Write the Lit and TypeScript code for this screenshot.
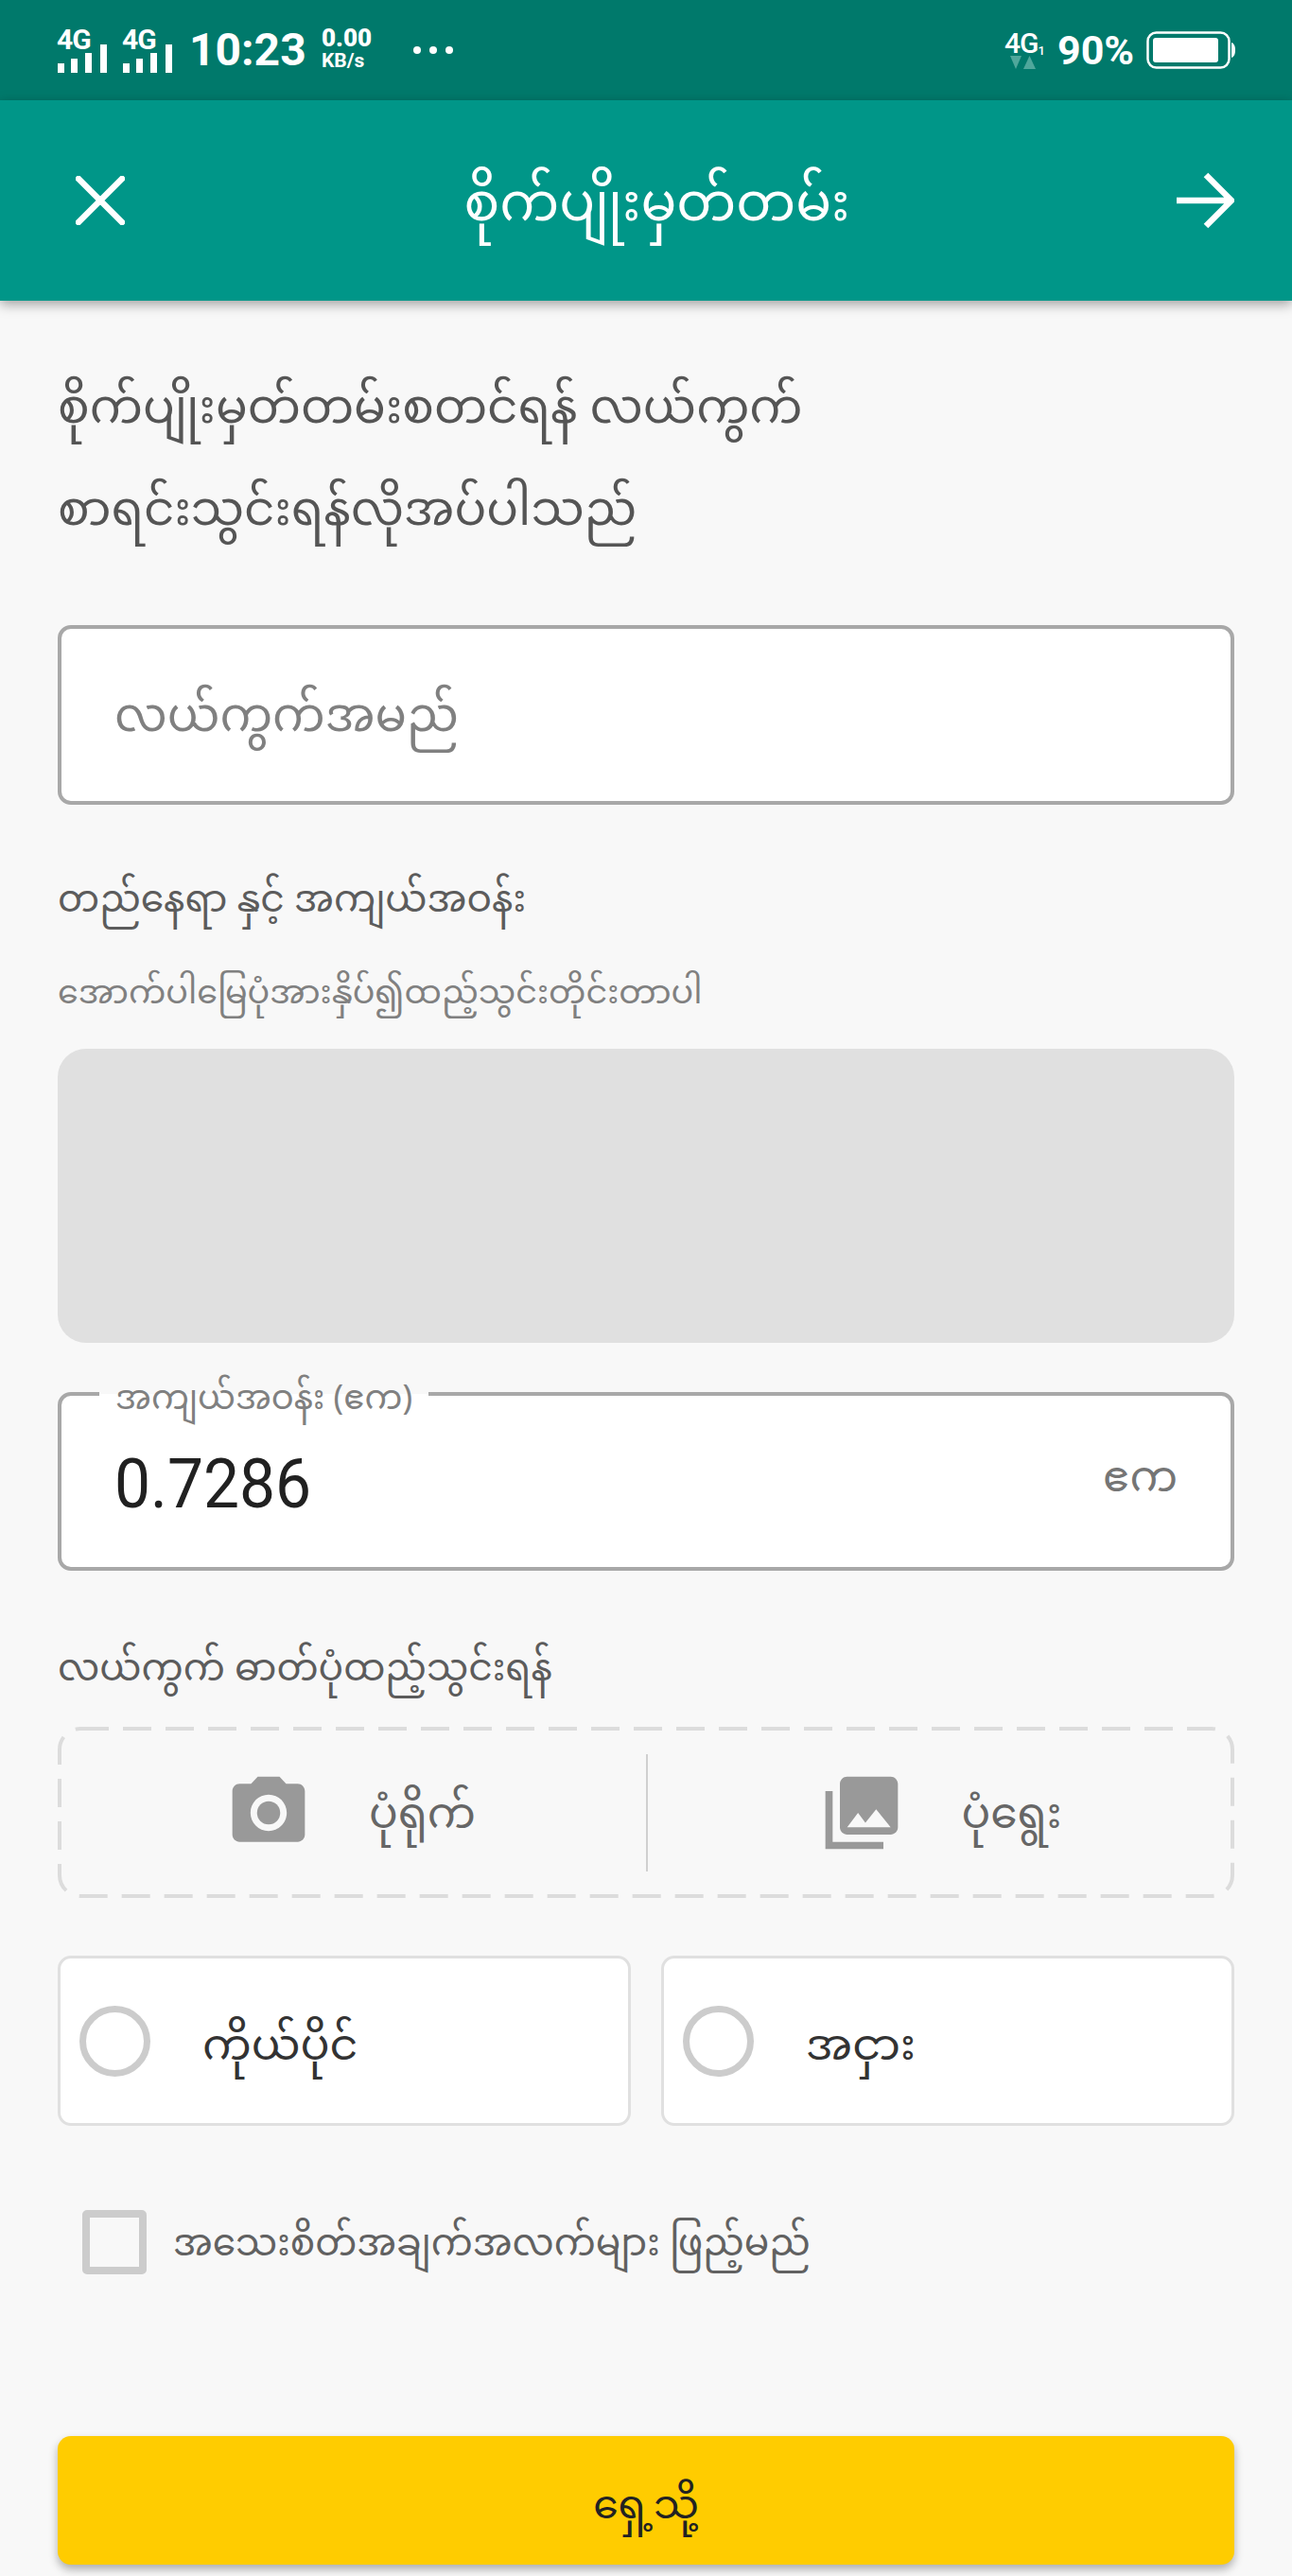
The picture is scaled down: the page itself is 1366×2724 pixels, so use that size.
import { LitElement, html, css, svg } from "lit";
import { customElement } from "lit/decorators.js";

const signal = () => svg`
  <rect x="1" y="20" width="7" height="10" fill="#fff"/>
  <rect x="15" y="15" width="7" height="15" fill="#fff"/>
  <rect x="30" y="9" width="7" height="21" fill="#fff"/>
  <rect x="46" y="0" width="7" height="30" fill="#fff"/>`;

@customElement("app-root")
export class AppRoot extends LitElement {
  static styles = css`
    :host {
      display: block;
      width: 1366px;
      height: 2724px;
      overflow: hidden;
      background: #f8f8f8;
      font-family: "Noto Sans Myanmar", "Padauk", "Myanmar Text", "Noto Sans", "DejaVu Sans", sans-serif;
      color: #616161;
    }
    * { box-sizing: border-box; }
    .status {
      height: 106px;
      background: #00796b;
      color: #fff;
      display: flex;
      align-items: center;
      font-family: Roboto, sans-serif;
      font-weight: 700;
      padding: 0 60px;
    }
    .net { width: 54px; margin-right: 15px; height: 48px; position: relative; }
    .net .g { position: absolute; left: 0; top: -2px; font-size: 30px; line-height: 30px; letter-spacing: -1px; }
    .net svg { position: absolute; left: 0; top: 18px; }
    .net.second { margin-right: 17px; }
    .time { font-size: 48px; line-height: 48px; width: 140px; }
    .speed { width: 97px; display: flex; flex-direction: column; }
    .speed b { font-size: 26px; line-height: 24px; margin-top: -3px; }
    .speed i { font-style: normal; font-size: 21px; line-height: 24px; }
    .dots { display: flex; gap: 9px; }
    .dots span { width: 8px; height: 8px; border-radius: 50%; background: #fff; }
    .spacer { flex: 1; }
    .net4 { width: 56px; display: flex; flex-direction: column; }
    .net4 .g { font-size: 30px; line-height: 26px; letter-spacing: -1px; font-weight: 500; }
    .net4 .g sub { font-size: 13px; line-height: 0; vertical-align: -2px; }
    .net4 svg { margin-left: 6px; }
    .pct { font-size: 43px; line-height: 44px; width: 94px; }
    .battery { display: block; }

    .appbar {
      height: 212px;
      background: #009688;
      color: #fff;
      display: flex;
      align-items: center;
      justify-content: space-between;
      padding: 0 61px 0 80px;
      box-shadow: 0 4px 12px rgba(0, 0, 0, 0.35);
      position: relative;
    }
    .title { font-size: 56px; line-height: 80px; padding-top: 16px; margin-left: 14px; }

    .content { padding: 64px 61px 0; }
    .intro { font-size: 50px; line-height: 108px; color: #555; white-space: nowrap; }
    .box {
      background: #fff;
      border: 4px solid #a8a8a8;
      border-radius: 14px;
      display: flex;
      align-items: center;
      padding: 0 56px;
      position: relative;
    }
    .name { height: 190px; margin-top: 63px; font-size: 49.500px; color: #808080; padding-top: 10px; }
    .label { font-size: 39.300px; line-height: 60px; color: #5c5c5c; white-space: nowrap; }
    .loc { margin-top: 74px; }
    .sub { font-size: 35px; line-height: 50px; margin-top: 43px; color: #808080; white-space: nowrap; }
    .map { height: 311px; margin-top: 31px; background: #e0e0e0; border-radius: 30px; }
    .field { height: 189px; margin-top: 52px; justify-content: space-between; }
    .legend {
      position: absolute;
      left: 40px;
      top: -16px;
      background: linear-gradient(#f8f8f8 14px, #fff 14px);
      padding: 0 17px;
      font-size: 35.500px;
      line-height: 44px;
      color: #808080;
      white-space: nowrap;
    }
    .value { font-family: Roboto, sans-serif; font-size: 72px; color: #212121; transform: scaleX(0.94); transform-origin: left center; padding-top: 6px; }
    .unit { font-size: 45px; color: #757575; }
    .photo-label { margin-top: 77px; }
    .photos {
      height: 181px;
      margin-top: 28px;
      border-radius: 24px;
      display: grid;
      grid-template-columns: 1fr 1fr;
      align-items: center;
      position: relative;
    }
    .dash { position: absolute; left: 0; top: 0; fill: none; stroke: #dcdcdc; stroke-width: 4; stroke-dasharray: 30 15; }
    .photo { display: flex; align-items: center; justify-content: center; gap: 60px; height: 124px; font-size: 45.500px; color: #666; }
    .photo + .photo { border-left: 2px solid #d0d0d0; }
    .photo span { padding-top: 12px; }
    .photo svg { display: block; fill: #999; margin-left: -3px; }
    .kinds { display: grid; grid-template-columns: 1fr 1fr; gap: 32px; margin-top: 61px; }
    .kind {
      height: 180px;
      background: #fff;
      border: 3px solid #e0e0e0;
      border-radius: 14px;
      display: flex;
      align-items: center;
      padding-left: 20px;
      gap: 55px;
      font-size: 46px;
      color: #333;
    }
    .kind span + span { padding-top: 18px; }
    .radio { width: 75px; height: 75px; border-radius: 50%; border: 7px solid #ccc; flex: none; }
    .detail { display: flex; align-items: center; gap: 28px; height: 68px; margin: 89px 0 0 26px; font-size: 39.200px; color: #616161; white-space: nowrap; }
    .detail span + span { padding-top: 10px; }
    .check { width: 68px; height: 68px; border: 8px solid #ccc; border-radius: 5px; flex: none; }
    .next {
      height: 136px;
      margin-top: 171px;
      padding-top: 18px;
      background: #ffcc00;
      border-radius: 14px;
      display: flex;
      align-items: center;
      justify-content: center;
      font-size: 42.500px;
      color: #222;
      box-shadow: 0 5px 10px rgba(0, 0, 0, 0.3);
    }
  `;

  render() {
    return html`
      <div class="status">
        <div class="net">
          <span class="g">4G</span>
          <svg width="54" height="30" viewBox="0 0 54 30">${signal()}</svg>
        </div>
        <div class="net second">
          <span class="g">4G</span>
          <svg width="54" height="30" viewBox="0 0 54 30">${signal()}</svg>
        </div>
        <div class="time">10:23</div>
        <div class="speed"><b>0.00</b><i>KB/s</i></div>
        <div class="dots"><span></span><span></span><span></span></div>
        <div class="spacer"></div>
        <div class="net4">
          <span class="g">4G<sub>1</sub></span>
          <svg width="30" height="14" viewBox="0 0 30 14">
            <path d="M0 0h12L6 14z" fill="#4fa79b"/>
            <path d="M14 14h13L20.500 0z" fill="#4fa79b"/>
          </svg>
        </div>
        <div class="pct">90%</div>
        <svg class="battery" width="94" height="40" viewBox="0 0 94 40">
          <rect x="1.500" y="1.500" width="86" height="37" rx="9" fill="none" stroke="#fff" stroke-width="2.500"/>
          <rect x="7" y="7" width="69" height="26" rx="3" fill="#fff"/>
          <path d="M90 12c3 1 4 4 4 8s-1 7-4 8z" fill="#fff"/>
        </svg>
      </div>
      <div class="appbar">
        <svg width="52" height="52" viewBox="0 0 52 52">
          <path d="M3 3l46 46M49 3L3 49" stroke="#fff" stroke-width="6.500" stroke-linecap="round" fill="none"/>
        </svg>
        <div class="title">စိုက်ပျိုးမှတ်တမ်း</div>
        <svg width="62" height="60" viewBox="0 0 62 60">
          <path d="M1 30h58M32 3l27 27-27 27" stroke="#fff" stroke-width="6.500" fill="none"/>
        </svg>
      </div>
      <div class="content">
        <div class="intro">စိုက်ပျိုးမှတ်တမ်းစတင်ရန် လယ်ကွက်<br />စာရင်းသွင်းရန်လိုအပ်ပါသည်</div>
        <div class="box name">လယ်ကွက်အမည်</div>
        <div class="label loc">တည်နေရာ နှင့် အကျယ်အဝန်း</div>
        <div class="sub">အောက်ပါမြေပုံအားနှိပ်၍ထည့်သွင်းတိုင်းတာပါ</div>
        <div class="map"></div>
        <div class="box field">
          <span class="legend">အကျယ်အဝန်း (ဧက)</span>
          <span class="value">0.7286</span>
          <span class="unit">ဧက</span>
        </div>
        <div class="label photo-label">လယ်ကွက် ဓာတ်ပုံထည့်သွင်းရန်</div>
        <div class="photos">
          <svg class="dash" width="1244" height="181" viewBox="0 0 1244 181">
            <rect x="2" y="2" width="1240" height="177" rx="22"/>
          </svg>
          <div class="photo">
            <svg width="92" height="92" viewBox="0 0 24 24">
              <circle cx="12" cy="12" r="3.200"/>
              <path d="M9 2L7.170 4H4c-1.100 0-2 .9-2 2v12c0 1.100.9 2 2 2h16c1.100 0 2-.9 2-2V6c0-1.100-.9-2-2-2h-3.170L15 2H9zm3 15c-2.760 0-5-2.240-5-5s2.240-5 5-5 5 2.240 5 5-2.240 5-5 5z"/>
            </svg>
            <span>ပုံရိုက်</span>
          </div>
          <div class="photo">
            <svg width="92" height="92" viewBox="0 0 24 24">
              <path d="M22 16V4c0-1.100-.9-2-2-2H8c-1.100 0-2 .9-2 2v12c0 1.100.9 2 2 2h12c1.100 0 2-.9 2-2zm-11-4l2.030 2.710L16 11l4 5H8l3-4zM2 6v16h16v-2H4V6H2z"/>
            </svg>
            <span>ပုံရွေး</span>
          </div>
        </div>
        <div class="kinds">
          <div class="kind"><span class="radio"></span><span>ကိုယ်ပိုင်</span></div>
          <div class="kind"><span class="radio"></span><span>အငှား</span></div>
        </div>
        <div class="detail"><span class="check"></span><span>အသေးစိတ်အချက်အလက်များ ဖြည့်မည်</span></div>
        <div class="next">ရှေ့သို့</div>
      </div>
    `;
  }
}
